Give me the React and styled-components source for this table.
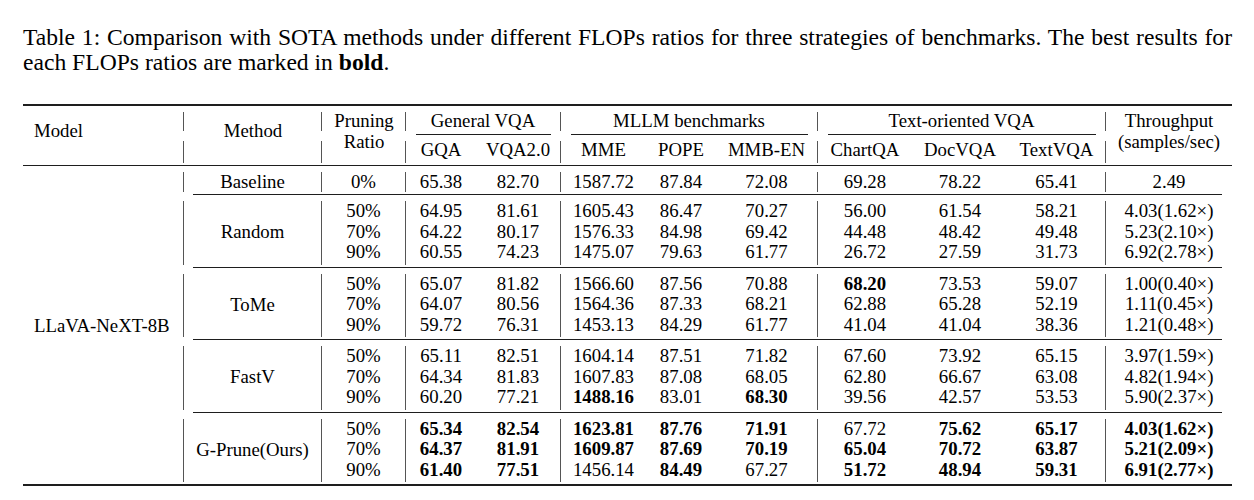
import React from 'react';
import styled, { createGlobalStyle } from 'styled-components';

const GlobalStyle = createGlobalStyle`
  html, body {
    margin: 0;
    padding: 0;
    background: #fff;
  }
  body {
    font-family: "Liberation Serif", "Times New Roman", serif;
    color: #000;
  }
`;

// '*' in front of a value marks the best result (bold)
const groups = [
  {
    method: 'Baseline',
    rows: [['0%', '65.38', '82.70', '1587.72', '87.84', '72.08', '69.28', '78.22', '65.41', '2.49']],
  },
  {
    method: 'Random',
    rows: [
      ['50%', '64.95', '81.61', '1605.43', '86.47', '70.27', '56.00', '61.54', '58.21', '4.03(1.62×)'],
      ['70%', '64.22', '80.17', '1576.33', '84.98', '69.42', '44.48', '48.42', '49.48', '5.23(2.10×)'],
      ['90%', '60.55', '74.23', '1475.07', '79.63', '61.77', '26.72', '27.59', '31.73', '6.92(2.78×)'],
    ],
  },
  {
    method: 'ToMe',
    rows: [
      ['50%', '65.07', '81.82', '1566.60', '87.56', '70.88', '*68.20', '73.53', '59.07', '1.00(0.40×)'],
      ['70%', '64.07', '80.56', '1564.36', '87.33', '68.21', '62.88', '65.28', '52.19', '1.11(0.45×)'],
      ['90%', '59.72', '76.31', '1453.13', '84.29', '61.77', '41.04', '41.04', '38.36', '1.21(0.48×)'],
    ],
  },
  {
    method: 'FastV',
    rows: [
      ['50%', '65.11', '82.51', '1604.14', '87.51', '71.82', '67.60', '73.92', '65.15', '3.97(1.59×)'],
      ['70%', '64.34', '81.83', '1607.83', '87.08', '68.05', '62.80', '66.67', '63.08', '4.82(1.94×)'],
      ['90%', '60.20', '77.21', '*1488.16', '83.01', '*68.30', '39.56', '42.57', '53.53', '5.90(2.37×)'],
    ],
  },
  {
    method: 'G-Prune(Ours)',
    rows: [
      ['50%', '*65.34', '*82.54', '*1623.81', '*87.76', '*71.91', '67.72', '*75.62', '*65.17', '*4.03(1.62×)'],
      ['70%', '*64.37', '*81.91', '*1609.87', '*87.69', '*70.19', '*65.04', '*70.72', '*63.87', '*5.21(2.09×)'],
      ['90%', '*61.40', '*77.51', '1456.14', '*84.49', '67.27', '*51.72', '*48.94', '*59.31', '*6.91(2.77×)'],
    ],
  },
];

// grid columns 3..12 hold ratio + the nine scores; these get a rule on their right
const sepCols = [3, 5, 8, 11];
const bandRows = [6, 8, 10, 12, 14];
const clineRows = [7, 9, 11, 13];

function App() {
  return (
    <Page>
      <GlobalStyle />
      <Caption>
        <CaptionLine $full>
          Table 1: Comparison with SOTA methods under different FLOPs ratios for three strategies of benchmarks. The best results for
        </CaptionLine>
        <CaptionLine>
          each FLOPs ratios are marked in <b>bold</b>.
        </CaptionLine>
      </Caption>

      <Table>
        <Rule $row={1} $h={2} />

        {/* header, first line */}
        <Sep $col={1} $row={2} />
        <Sep $col={2} $row={2} />
        <Sep $col={3} $row={2} />
        <HeadCell $col="4 / 6" $row={2} $sep>General VQA</HeadCell>
        <HeadCell $col="6 / 9" $row={2} $sep>MLLM benchmarks</HeadCell>
        <HeadCell $col="9 / 12" $row={2} $sep>Text-oriented VQA</HeadCell>

        <Rule $row={3} $col="4 / 6" $trim={10} />
        <Rule $row={3} $col="6 / 9" $trim={10} />
        <Rule $row={3} $col="9 / 12" $trim={10} />

        {/* header, second line */}
        <Sep $col={1} $row={4} $top={5} />
        <Sep $col={2} $row={4} $top={5} />
        <Sep $col={3} $row={4} $top={5} />
        <HeadCell $col={4} $row={4} $top={5}>GQA</HeadCell>
        <HeadCell $col={5} $row={4} $top={5} $sep>VQA2.0</HeadCell>
        <HeadCell $col={6} $row={4} $top={5}>MME</HeadCell>
        <HeadCell $col={7} $row={4} $top={5}>POPE</HeadCell>
        <HeadCell $col={8} $row={4} $top={5} $sep>MMB-EN</HeadCell>
        <HeadCell $col={9} $row={4} $top={5}>ChartQA</HeadCell>
        <HeadCell $col={10} $row={4} $top={5}>DocVQA</HeadCell>
        <HeadCell $col={11} $row={4} $top={5} $sep>TextVQA</HeadCell>

        <SpanLabel $col={1} $row="2 / 5" $left $shift={10}>Model</SpanLabel>
        <SpanLabel $col={2} $row="2 / 5" $shift={10}>Method</SpanLabel>
        <SpanLabel $col={3} $row="2 / 5" $shift={10}>
          <span>Pruning</span>
          <span>Ratio</span>
        </SpanLabel>
        <SpanLabel $col={12} $row="2 / 5" $shift={10}>
          <span>Throughput</span>
          <span>(samples/sec)</span>
        </SpanLabel>

        <Rule $row={5} />

        {/* body */}
        <SpanLabel $col={1} $row="6 / 15" $left>LLaVA-NeXT-8B</SpanLabel>

        {groups.map((g, gi) => {
          const row = bandRows[gi];
          return (
            <React.Fragment key={g.method}>
              <Sep $col={1} $row={row} />
              <Cell $col={2} $row={row} $sep $middle>{g.method}</Cell>
              {g.rows[0].map((_, ci) => (
                <Cell key={ci} $col={ci + 3} $row={row} $sep={sepCols.includes(ci + 3)}>
                  {g.rows.map((r, ri) => {
                    const v = r[ci];
                    const bold = v.startsWith('*');
                    return (
                      <Value key={ri} $bold={bold}>
                        {bold ? v.slice(1) : v}
                      </Value>
                    );
                  })}
                </Cell>
              ))}
            </React.Fragment>
          );
        })}

        {clineRows.map((r) => (
          <Rule key={r} $row={r} $col="2 / -1" $trim={9} $trimR={10} />
        ))}

        <Rule $row={15} $h={2} />
      </Table>
    </Page>
  );
}

const Page = styled.div`
  width: 1254px;
  height: 500px;
  padding: 25px 0 0 23px;
  box-sizing: border-box;
  overflow: hidden;
`;

const Caption = styled.div`
  width: 1209px;
  font-size: 23.6px;
  line-height: 25px;
`;

const CaptionLine = styled.div`
  white-space: nowrap;
  text-align: ${(p) => (p.$full ? 'justify' : 'left')};
  text-align-last: ${(p) => (p.$full ? 'justify' : 'auto')};
`;

const Table = styled.div`
  display: grid;
  margin-top: 29px;
  width: 1209px;
  grid-template-columns: 161px 138px 84px 70px 85px 85px 70px 102px 94px 96px 98px 126px;
  grid-template-rows: 2px 27px 3px 29px 1px 28px 1px 71.5px 1px 71.5px 1px 71.5px 1px 71.5px 2px;
  font-size: 18.8px;
`;

const Rule = styled.div`
  grid-column: ${(p) => p.$col || '1 / -1'};
  grid-row: ${(p) => p.$row};
  align-self: center;
  height: ${(p) => p.$h || 1}px;
  margin-left: ${(p) => p.$trim || 0}px;
  margin-right: ${(p) => p.$trimR ?? p.$trim ?? 0}px;
  background: #1e1e1e;
`;

const Sep = styled.div`
  grid-column: ${(p) => p.$col};
  grid-row: ${(p) => p.$row};
  margin: ${(p) => p.$top ?? 6}px 0 2px;
  border-right: 1px solid #555;
`;

const HeadCell = styled.div`
  grid-column: ${(p) => p.$col};
  grid-row: ${(p) => p.$row};
  margin: ${(p) => p.$top ?? 6}px 0 2px;
  border-right: ${(p) => (p.$sep ? '1px solid #555' : 'none')};
  text-align: center;
  line-height: 17px;
  white-space: nowrap;
`;

const SpanLabel = styled.div`
  grid-column: ${(p) => p.$col};
  grid-row: ${(p) => p.$row};
  display: flex;
  flex-direction: column;
  justify-content: center;
  align-items: ${(p) => (p.$left ? 'flex-start' : 'center')};
  padding: 0 0 ${(p) => p.$shift || 0}px ${(p) => (p.$left ? 11 : 0)}px;
  line-height: 21px;
  white-space: nowrap;
`;

const Cell = styled.div`
  grid-column: ${(p) => p.$col};
  grid-row: ${(p) => p.$row};
  margin: 6px 0 2px;
  border-right: ${(p) => (p.$sep ? '1px solid #555' : 'none')};
  display: flex;
  flex-direction: column;
  align-items: center;
  justify-content: ${(p) => (p.$middle ? 'center' : 'flex-start')};
  line-height: 20.7px;
  white-space: nowrap;
`;

const Value = styled.span`
  font-weight: ${(p) => (p.$bold ? 700 : 400)};
`;

export default App;
